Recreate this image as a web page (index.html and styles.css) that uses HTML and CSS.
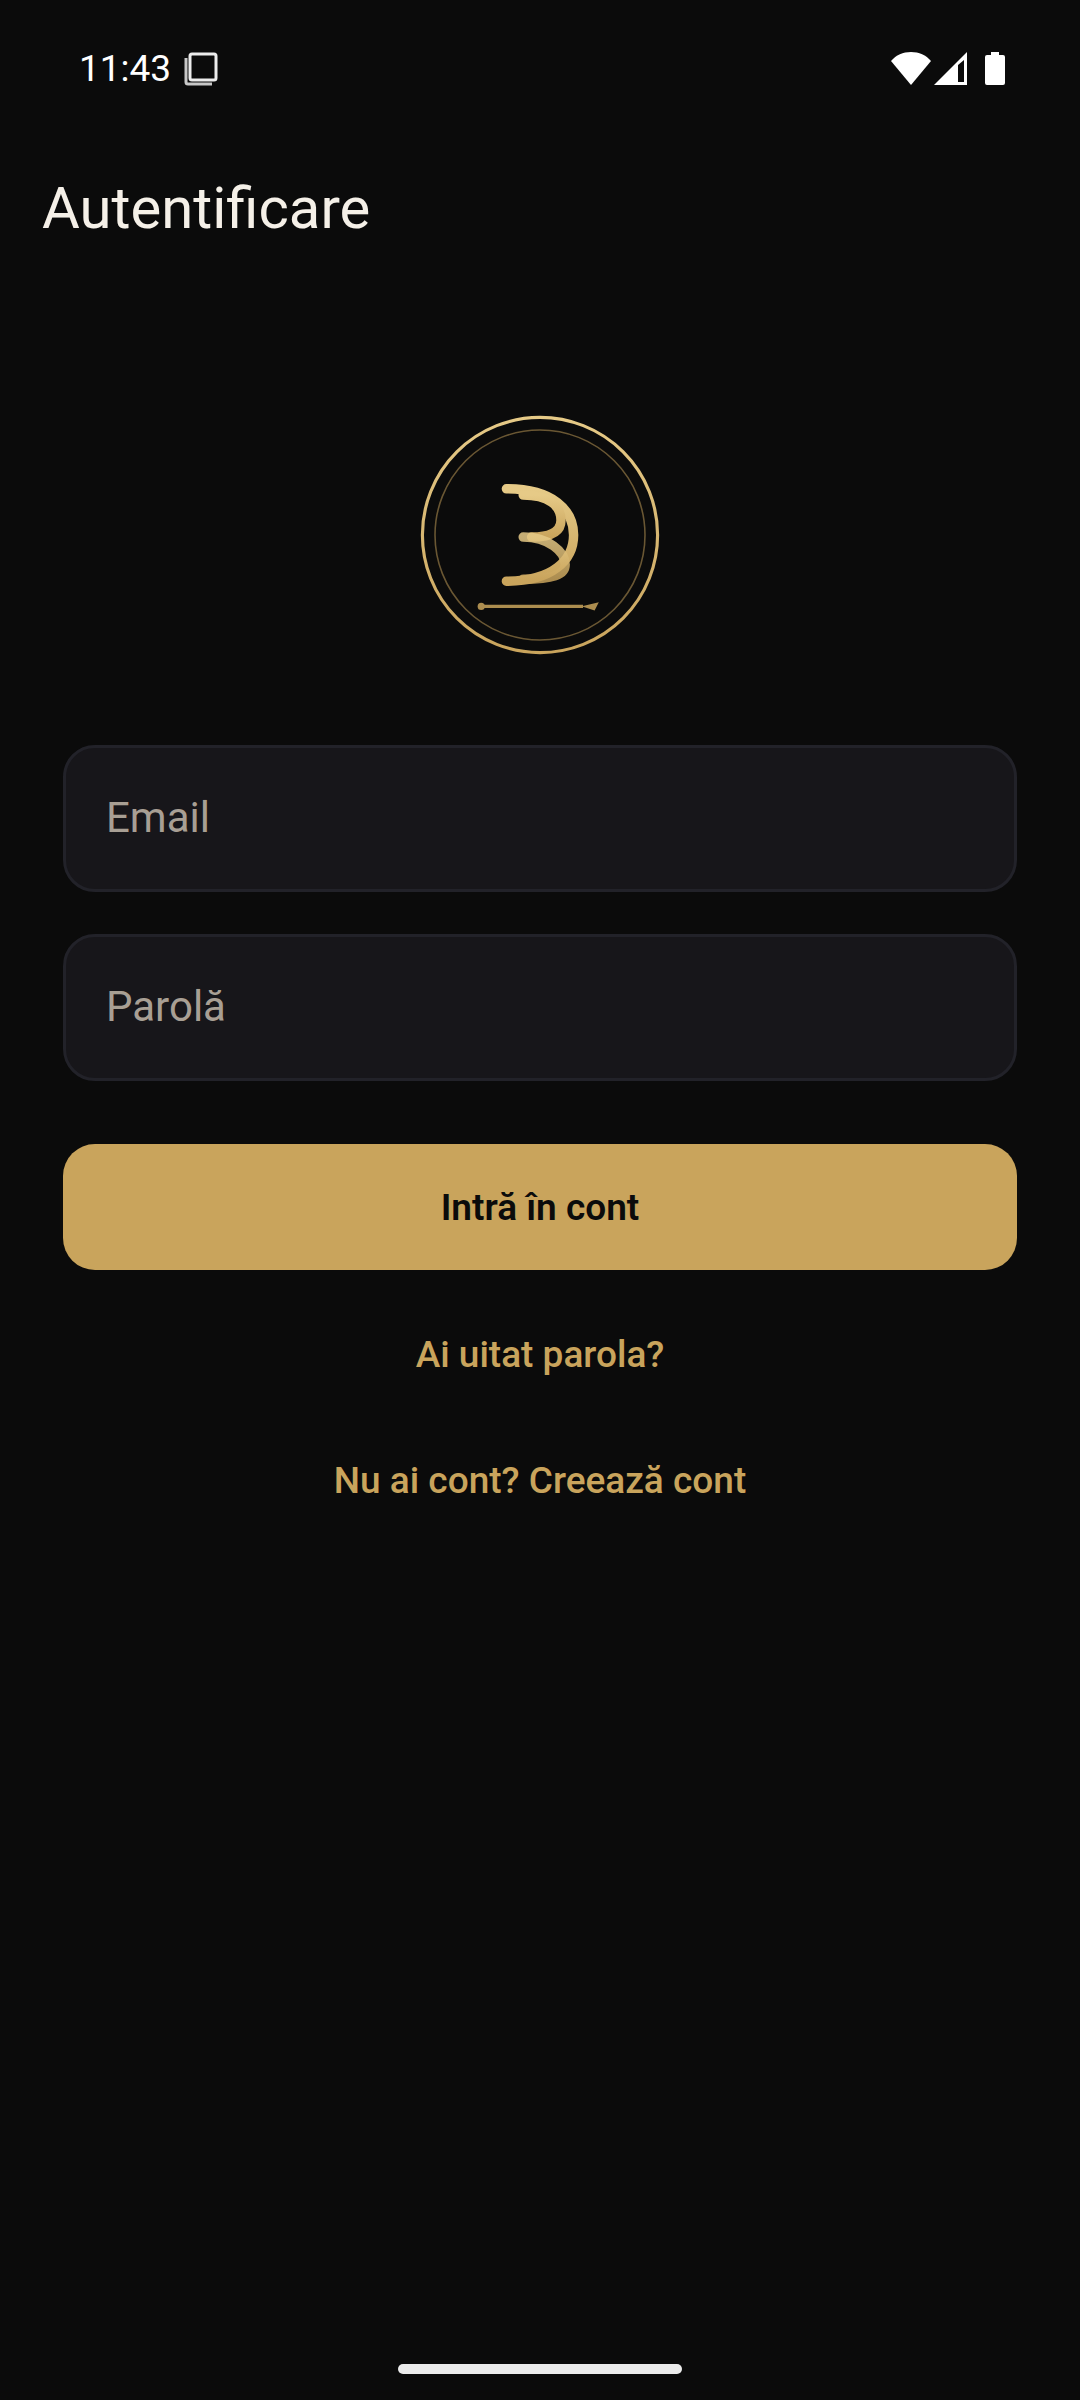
FILE: index.html
```html
<!DOCTYPE html>
<html lang="ro">
<head>
<meta charset="utf-8">
<meta name="viewport" content="width=device-width, initial-scale=1">
<title>Autentificare</title>
<link rel="stylesheet" href="styles.css">
</head>
<body>
<div class="screen">
  <div class="status-bar">
    <div class="status-group">
      <span class="clock">11:43</span>
      <svg class="tabs-icon" viewBox="0 0 34 34" width="34" height="34" aria-hidden="true">
        <rect class="tabs-front" x="6" y="2" width="26" height="26" rx="2"/>
        <path d="M2 6V30a2 2 0 0 0 2 2H28"/>
      </svg>
    </div>
    <div class="status-group status-icons">
      <svg viewBox="0 0 40 34" width="40" height="34" aria-hidden="true"><path d="M0 9C5 3 12 0 20 0S35 3 40 9L20 33Z"/></svg>
      <svg viewBox="0 0 34 34" width="34" height="34" aria-hidden="true"><path fill-rule="evenodd" d="M0 33L33 0V33ZM24 13V30H30V8Z"/></svg>
      <svg class="battery-icon" viewBox="0 0 20 34" width="20" height="34" aria-hidden="true"><path d="M6 0H14V3H18Q20 3 20 5V31Q20 33 18 33H2Q0 33 0 31V5Q0 3 2 3H6Z"/></svg>
    </div>
  </div>
  <header class="app-bar"><h1>Autentificare</h1></header>
  <main class="content">
    <svg class="logo" viewBox="0 0 120 120" role="img" aria-label="Logo">
      <defs>
        <linearGradient id="gold" x1="0" y1="0" x2="0" y2="1">
          <stop offset="0" stop-color="#e6ca87"/>
          <stop offset="1" stop-color="#c9a45c"/>
        </linearGradient>
      </defs>
      <g fill="none" stroke="url(#gold)" stroke-linecap="round">
        <circle cx="60" cy="60" r="56" stroke-width="1.5"/>
        <circle cx="60" cy="60" r="50" stroke="#c9a45c" stroke-width=".75" opacity=".5"/>
        <path d="M44 38C66 38 76 48 76 60S66 82 44 82" stroke-width="4.5"/>
        <path d="M52 41C64 41 70 46 70 53C70 58 66 61 56 61" stroke-width="4.5"/>
        <path d="M52 61C64 61 72 68 72 74C72 79 66 81 52 81" stroke-width="4.5" opacity=".85"/>
      </g>
      <g fill="#c9a45c" opacity=".85">
        <circle cx="32" cy="94" r="1.7"/>
        <path d="M32 93.25H80.5V93.8L88 92L86 96L80.5 94.2V94.75H32Z"/>
      </g>
    </svg>
    <form class="form">
      <label class="field"><input type="email" name="email" placeholder=" "><span class="field-label">Email</span></label>
      <label class="field"><input type="password" name="password" placeholder=" "><span class="field-label">Parolă</span></label>
      <button class="submit" type="submit">Intră în cont</button>
    </form>
    <nav class="links">
      <a href="#reset">Ai uitat parola?</a>
      <a href="#signup">Nu ai cont? Creează cont</a>
    </nav>
  </main>
  <div class="home-area"><div class="home-handle"></div></div>
</div>
</body>
</html>
```
FILE: styles.css
```css
* { box-sizing: border-box; }

body {
  margin: 0;
  background: #0b0b0b;
  color: #f5f0e8;
  font-family: Roboto, "Noto Sans", sans-serif;
}

.screen {
  display: flex;
  flex-direction: column;
  min-height: 100vh;
}

.status-bar {
  display: flex;
  align-items: center;
  justify-content: space-between;
  height: 134px;
  padding: 4px 75px 0 79px;
}

.status-group {
  display: flex;
  align-items: center;
  gap: 13px;
}

.clock {
  color: #fff;
  font-size: 37px;
  line-height: 44px;
}

.tabs-icon {
  fill: none;
  stroke: #c8c8c8;
  stroke-width: 3;
}

.tabs-front { stroke: #ececec; }

.status-icons {
  gap: 3px;
  fill: #fff;
}

.battery-icon { margin-left: 14px; }

.app-bar {
  display: flex;
  align-items: center;
  height: 147px;
  padding: 0 42px;
}

.app-bar h1 {
  margin: 0;
  font-size: 58px;
  font-weight: 400;
  line-height: 74px;
}

.content {
  display: flex;
  flex: 1;
  flex-direction: column;
  padding: 128px 63px 0;
}

.logo {
  align-self: center;
  width: 252px;
  height: 252px;
}

.form {
  display: flex;
  flex-direction: column;
  gap: 42px;
  margin-top: 84px;
}

.field {
  display: grid;
  align-items: center;
  height: 147px;
  border: 3px solid #222229;
  border-radius: 32px;
  background: #17161a;
  font-size: 42px;
  line-height: 62px;
}

.field-label,
.field input {
  grid-area: 1 / 1;
  padding: 0 40px;
}

.field-label {
  padding-bottom: 2px;
  color: #a89f94;
  pointer-events: none;
}

.field input {
  width: 100%;
  height: 100%;
  border: 0;
  outline: 0;
  background: transparent;
  color: inherit;
  font: inherit;
}

.field:focus-within { border-color: #c9a45c; }

.field input:not(:placeholder-shown) + .field-label { visibility: hidden; }

.submit {
  height: 126px;
  margin-top: 21px;
  border: 0;
  border-radius: 32px;
  background: #c9a45c;
  color: #0b0b0b;
  font: 600 37px/53px Roboto, "Noto Sans", sans-serif;
}

.links {
  display: flex;
  flex-direction: column;
  align-items: center;
  margin-top: 22px;
}

.links a {
  padding: 36px 32px;
  color: #c9a45c;
  font-size: 37px;
  font-weight: 500;
  line-height: 54px;
  text-decoration: none;
}

.home-area {
  display: flex;
  justify-content: center;
  padding-bottom: 26px;
}

.home-handle {
  width: 284px;
  height: 10px;
  border-radius: 5px;
  background: #ececec;
}
```
